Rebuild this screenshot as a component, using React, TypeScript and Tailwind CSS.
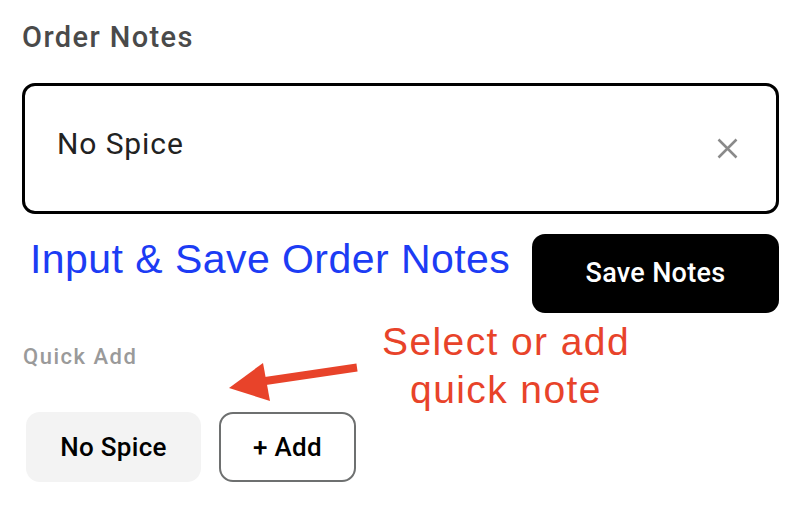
import React from "react";

export default function App() {
  const roboto = { fontFamily: "Roboto, 'Noto Sans', sans-serif" } as React.CSSProperties;
  const helv = { fontFamily: "'Liberation Sans', Arial, sans-serif" } as React.CSSProperties;
  return (
    <div className="relative w-[800px] h-[522px] bg-white overflow-hidden" style={roboto}>
      <div className="px-[22px] pt-[23px] flex flex-col">
        <h1 className="text-[29px] leading-[28px] font-medium text-[#4a4a4a] tracking-[1.4px]">Order Notes</h1>
        <div className="mt-[32px] h-[131px] w-[757px] border-[3px] border-black rounded-[13px] flex items-center justify-between pl-[32px] pr-[38px]">
          <span className="mb-[10px] text-[30px] leading-[30px] text-[#222] tracking-[0.9px]">No Spice</span>
          <svg width="21" height="21" viewBox="0 0 21 21">
            <path d="M1.5 1.5 L19.5 19.5 M19.5 1.5 L1.5 19.5" stroke="#8a8a8a" strokeWidth="2.5" strokeLinecap="butt" />
          </svg>
        </div>
        <div className="mt-[20px] flex justify-between w-[757px]">
          <span className="pl-[8px] pt-[3px] text-[41px] leading-[44px] text-[#1c3cf4] tracking-[0.45px]" style={helv}>
            Input &amp; Save Order Notes
          </span>
          <button className="w-[247px] h-[79px] bg-black rounded-[13px] text-white text-[27px] font-medium tracking-[0.3px]">
            Save Notes
          </button>
        </div>
        <div className="mt-[33px] pl-[1px] text-[22px] leading-[22px] font-medium text-[#9a9a9a] tracking-[1.5px]">Quick Add</div>
        <div className="mt-[44px] flex gap-[18px] pl-[4px]">
          <button className="w-[175px] h-[70px] rounded-[14px] bg-[#f3f3f3] text-[26px] font-medium text-black tracking-[0.3px]">
            No Spice
          </button>
          <button className="w-[137px] h-[70px] rounded-[14px] border-2 border-[#6e7070] text-[26px] font-medium text-black tracking-[0.3px]">
            + Add
          </button>
        </div>
      </div>

      <svg className="absolute left-0 top-0 pointer-events-none" width="800" height="522">
        <line x1="357" y1="367.5" x2="262" y2="381.5" stroke="#e8432a" strokeWidth="8" />
        <polygon points="229,388 263,363 270,401" fill="#e8432a" />
      </svg>
      <div className="absolute left-[360px] top-[318px] w-[292px] text-center text-[39px] leading-[48px] text-[#e8432a] tracking-[1.4px]" style={helv}>
        Select or add
        <br />
        quick note
      </div>
    </div>
  );
}
